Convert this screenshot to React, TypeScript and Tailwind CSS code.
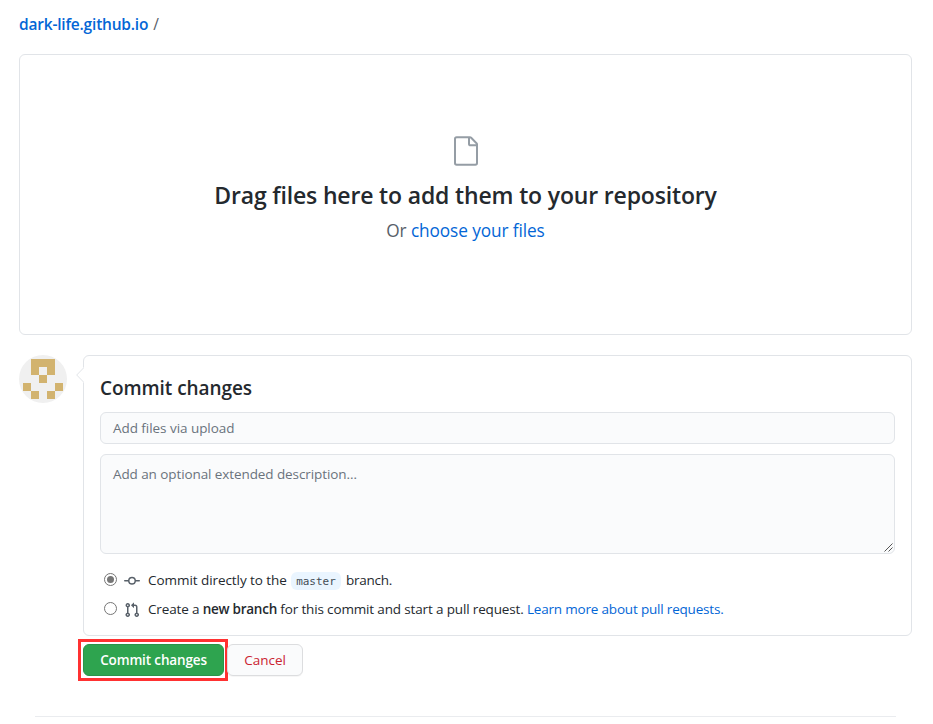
import React from "react";

const AVATAR_CELLS = [
  [12, 4], [20, 4], [28, 4],
  [12, 12], [28, 12],
  [20, 20],
  [4, 28], [36, 28],
  [12, 36], [28, 36],
];

function FileIcon() {
  return (
    <svg className="block h-8 w-8 fill-[#959da5]" viewBox="0 0 24 24">
      <path
        fillRule="evenodd"
        d="M5 2.5a.5.5 0 00-.5.5v18a.5.5 0 00.5.5h14a.5.5 0 00.5-.5V8.5h-4a2 2 0 01-2-2v-4H5zm10 0v4a.5.5 0 00.5.5h4a.5.5 0 00-.146-.336l-4.018-4.018A.5.5 0 0015 2.5zM3 3a2 2 0 012-2h9.982a2 2 0 011.414.586l4.018 4.018A2 2 0 0121 7.018V21a2 2 0 01-2 2H5a2 2 0 01-2-2V3z"
      />
    </svg>
  );
}

function CommitIcon() {
  return (
    <svg className="block h-4 w-4 shrink-0 fill-[#586069]" viewBox="0 0 16 16">
      <path
        fillRule="evenodd"
        d="M10.5 7.75a2.5 2.5 0 11-5 0 2.5 2.5 0 015 0zm1.43.75a4.002 4.002 0 01-7.86 0H.75a.75.75 0 110-1.5h3.32a4.001 4.001 0 017.86 0h3.32a.75.75 0 110 1.5h-3.32z"
      />
    </svg>
  );
}

function PullRequestIcon() {
  return (
    <svg className="block h-4 w-4 shrink-0 fill-[#586069]" viewBox="0 0 16 16">
      <path
        fillRule="evenodd"
        d="M7.177 3.073L9.573.677A.25.25 0 0110 .854v4.792a.25.25 0 01-.427.177L7.177 3.427a.25.25 0 010-.354zM3.75 2.5a.75.75 0 100 1.5.75.75 0 000-1.5zm-2.25.75a2.25 2.25 0 113 2.122v5.256a2.251 2.251 0 11-1.5 0V5.372A2.25 2.25 0 011.5 3.25zM11 2.5h-1V4h1a1 1 0 011 1v5.628a2.251 2.251 0 101.5 0V5A2.5 2.5 0 0011 2.5zm1 10.25a.75.75 0 111.5 0 .75.75 0 01-1.5 0zM3.75 12a.75.75 0 100 1.5.75.75 0 000-1.5z"
      />
    </svg>
  );
}

function Avatar() {
  return (
    <svg className="block h-12 w-12 shrink-0 rounded-full bg-[#f0f0f0]" viewBox="0 0 48 48" shapeRendering="crispEdges">
      {AVATAR_CELLS.map(([x, y]) => (
        <rect key={`${x}-${y}`} x={x} y={y} width="8" height="8" fill="#d2b36f" />
      ))}
    </svg>
  );
}

function Radio({ checked }: { checked?: boolean }) {
  return (
    <span className="mb-[3px] flex h-[13px] w-[13px] shrink-0 items-center justify-center rounded-full border border-[#767676] bg-white">
      {checked && <span className="h-[7.5px] w-[7.5px] rounded-full bg-[#767676]" />}
    </span>
  );
}

export default function App() {
  return (
    <div className="h-[724px] w-full overflow-hidden bg-white pr-[21px] pl-[19px] font-['Open_Sans','Noto_Sans',sans-serif] text-[13.5px] text-[#24292e]">
      <div className="flex h-[54px] items-center pb-1 text-[15.5px] whitespace-pre">
        <span className="font-semibold tracking-[-0.2px] text-[#0366d6]">dark-life.github.io</span>
        <span className="pl-[5px] text-[#586069]">/</span>
      </div>

      <section className="flex h-[281px] flex-col items-center rounded-md border border-[#e1e4e8] pt-20">
        <FileIcon />
        <h1 className="mt-[10px] h-9 text-[23px] leading-9 font-semibold tracking-[-0.16px] whitespace-nowrap">
          Drag files here to add them to your repository
        </h1>
        <p className="h-9 text-[17.25px] leading-9 tracking-[-0.1px] whitespace-nowrap text-[#586069]">
          Or <a className="text-[#0366d6]">choose your files</a>
        </p>
      </section>

      <div className="mt-5 flex gap-4">
        <Avatar />
        <section className="relative h-[281px] flex-1 rounded-md border border-[#e1e4e8] px-4">
          <svg className="absolute top-[11px] -left-[8px] h-4 w-2" viewBox="0 0 8 16">
            <path d="M8 0v16L.5 8z" fill="white" />
            <path d="M8 .5L.7 8 8 15.5" fill="none" stroke="#e1e4e8" />
          </svg>
          <h3 className="mt-4 h-8 text-[19px] leading-8 font-semibold tracking-[-0.07px]">Commit changes</h3>
          <div className="mt-2 flex h-8 items-center rounded-md border border-[#e1e4e8] bg-[#fafbfc] px-3 text-[#6a737d]">
            <span className="tracking-[-0.05px]">Add files via upload</span>
          </div>
          <div className="relative mt-[10px] h-[100px] rounded-md border border-[#e1e4e8] bg-[#fafbfc] px-3 pt-[9px] leading-5 text-[#6a737d]">
            <span className="tracking-[-0.09px]">Add an optional extended description…</span>
            <svg className="absolute right-[1px] bottom-[1px] h-[9px] w-[9px]" viewBox="0 0 9 9">
              <path d="M.5 8.5l8-8M4.5 8.5l4-4" stroke="#555" strokeWidth="1" />
            </svg>
          </div>
          <div className="mt-[17px] flex h-5 items-center pl-1 leading-5 whitespace-pre">
            <Radio checked />
            <span className="pl-[7px]"><CommitIcon /></span>
            <span className="w-[151px] pb-0.5 pl-2 tracking-[-0.06px]">Commit directly to the</span>
            <span className="h-[18px] w-[50px] rounded-md bg-[#eaf5ff] text-center font-['DejaVu_Sans_Mono',monospace] text-[11px] leading-[19px] text-[#444d56]">master</span>
            <span className="pb-0.5 pl-[5px] tracking-[-0.25px]">branch.</span>
          </div>
          <div className="mt-[9px] flex h-5 items-center pl-1 leading-5 whitespace-pre">
            <Radio />
            <span className="pl-[7px]"><PullRequestIcon /></span>
            <span className="pb-0.5 pl-2 tracking-[-0.15px]">
              Create a <b className="font-semibold tracking-[-0.25px]">new branch</b> for this commit and start a pull request. <a className="tracking-[-0.19px] text-[#0366d6]">Learn more about pull requests.</a>
            </span>
          </div>
        </section>
      </div>

      <div className="mt-[3px] ml-[59px] flex h-[42px] items-center">
        <div className="flex h-[42px] w-[150px] shrink-0 items-center justify-center border-[3px] border-[#ff3131] pl-px">
          <button className="h-8 w-[141px] rounded-md border border-[#2b9348] bg-[#2ea44f] font-semibold tracking-[-0.14px] whitespace-nowrap text-white">Commit changes</button>
        </div>
        <button className="-ml-px h-8 w-[76px] rounded-md border border-[#dcdddf] bg-[#fafbfc] font-medium text-[#cb2431] shadow-[0_1px_0_rgba(27,31,35,0.04)]">Cancel</button>
      </div>
      <hr className="mt-[35px] mr-4 ml-4 border-[#eaecef]" />
    </div>
  );
}
